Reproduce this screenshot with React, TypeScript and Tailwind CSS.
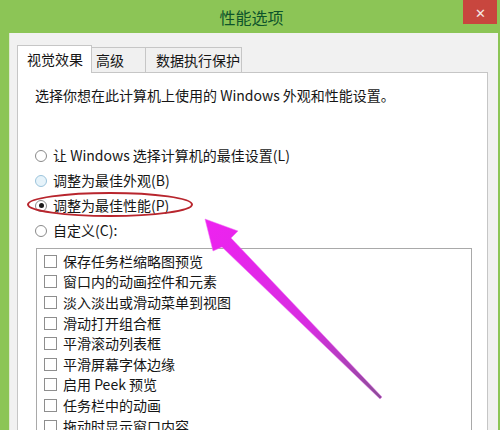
import React from "react";

const font = { fontFamily: '"Noto Sans CJK SC", "Noto Sans", sans-serif' };

const radios = [
  { label: "让 Windows 选择计算机的最佳设置(L)", checked: false, hover: false },
  { label: "调整为最佳外观(B)", checked: false, hover: true },
  { label: "调整为最佳性能(P)", checked: true, hover: false },
  { label: "自定义(C):", checked: false, hover: false },
];

const options = [
  "保存任务栏缩略图预览",
  "窗口内的动画控件和元素",
  "淡入淡出或滑动菜单到视图",
  "滑动打开组合框",
  "平滑滚动列表框",
  "平滑屏幕字体边缘",
  "启用 Peek 预览",
  "任务栏中的动画",
  "拖动时显示窗口内容",
];

function Radio({ checked, hover }: { checked: boolean; hover: boolean }) {
  return (
    <span
      className={
        "flex items-center justify-center w-[12px] h-[12px] rounded-full border " +
        (hover ? "border-[#9cc4dc] bg-[#e6f3fa]" : "border-[#8a8a8a] bg-white")
      }
    >
      {checked && <span className="w-[5px] h-[5px] rounded-full bg-[#1a1a1a]" />}
    </span>
  );
}

export default function App() {
  return (
    <div
      className="relative w-[500px] h-[430px] overflow-hidden bg-[#8cc556] flex flex-col text-[#151515]"
      style={font}
    >
      {/* title bar */}
      <div className="h-[33px] shrink-0 flex items-start">
        <div className="flex-1 flex justify-center pt-[5px] pl-[40px]">
          <span className="text-[16px] leading-[24px] text-green-900">性能选项</span>
        </div>
        <div className="w-[34px] h-[24px] mr-[3px] bg-[#c8463e] flex items-center justify-center text-[#f6e6e4] text-[13px] leading-none">
          ✕
        </div>
      </div>

      {/* dialog body */}
      <div className="flex-1 ml-[9px] mr-[2px] bg-[#f1f1f1] border-l border-[#dfe9d2] pl-[7px] pr-[10px] pt-[11px] flex flex-col">
        {/* tabs */}
        <div className="flex items-end h-[28px] text-[14px]">
          <div className="h-[28px] w-[75px] bg-white border border-b-0 border-[#c6c6c6] flex items-center pl-[9px] -mb-px z-10">
            视觉效果
          </div>
          <div className="h-[25px] w-[54px] bg-[#f0f0f0] border border-l-0 border-b-0 border-[#c6c6c6] flex items-center pl-[4px]">
            高级
          </div>
          <div className="h-[25px] w-[96px] bg-[#f0f0f0] border border-l-0 border-b-0 border-[#c6c6c6] flex items-center pl-[10px]">
            数据执行保护
          </div>
        </div>

        {/* panel */}
        <div className="flex-1 bg-white border border-[#c6c6c6] pl-[17px] pr-[15px] pt-[12px] flex flex-col">
          <div className="text-[14px] leading-[20px]">选择你想在此计算机上使用的 Windows 外观和性能设置。</div>

          <div className="mt-[38px] flex flex-col">
            {radios.map((r) => (
              <div key={r.label} className="h-[25px] flex items-center gap-[6px] text-[14px]">
                <Radio checked={r.checked} hover={r.hover} />
                <span>{r.label}</span>
              </div>
            ))}
          </div>

          <div className="mt-[5px] ml-[1px] flex-1 border border-[#a9a9a9] pt-[2px] pl-[7px] flex flex-col">
            {options.map((o) => (
              <div key={o} className="h-[20.6px] shrink-0 flex items-center gap-[6px] text-[14px]">
                <span className="w-[13px] h-[13px] border border-[#8e8e8e] bg-white" />
                <span>{o}</span>
              </div>
            ))}
          </div>
        </div>
      </div>

      {/* annotations drawn on the screenshot */}
      <svg className="absolute inset-0 pointer-events-none" width="500" height="430" viewBox="0 0 500 430">
        <defs>
          <linearGradient id="arrowFill" x1="205" y1="219" x2="381" y2="398" gradientUnits="userSpaceOnUse">
            <stop offset="0" stopColor="#ee22f0" />
            <stop offset="0.6" stopColor="#d62ee0" />
            <stop offset="1" stopColor="#8a4e96" />
          </linearGradient>
        </defs>
        <ellipse cx="110" cy="204.5" rx="82" ry="11.5" fill="none" stroke="#b8252d" strokeWidth="2" />
        <polygon
          points="205,219 238,231 231,238 382,397 380,399 222,247 213,251"
          fill="url(#arrowFill)"
          stroke="#f070f4"
          strokeWidth="1"
          strokeOpacity="0.5"
          strokeLinejoin="round"
        />
      </svg>
    </div>
  );
}
